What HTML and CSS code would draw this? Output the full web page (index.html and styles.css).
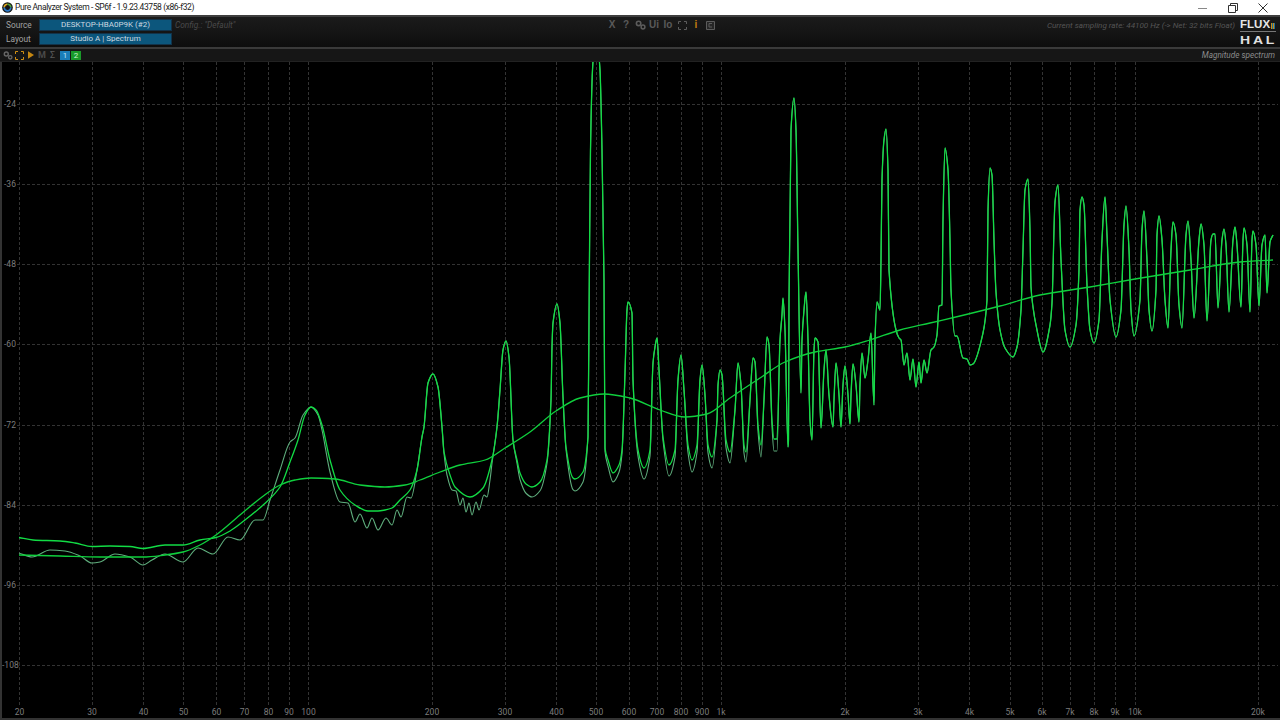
FILE: index.html
```html
<!DOCTYPE html>
<html lang="en">
<head>
<meta charset="utf-8">
<title>Pure Analyzer System</title>
<link rel="stylesheet" href="styles.css">
</head>
<body>
<div class="app">
  <header class="titlebar">
    <svg class="app-icon" viewBox="0 0 12 12"><circle cx="6" cy="6" r="5.800" fill="#141414"/><path d="M2.400 6A3.600 3.600 0 0 1 6 2.400" fill="none" stroke="#e0a81f" stroke-width="1.800"/><path d="M6 2.400A3.600 3.600 0 0 1 9.600 6" fill="none" stroke="#4fa23a" stroke-width="1.800"/><path d="M9.600 6A3.600 3.600 0 0 1 2.400 6" fill="none" stroke="#2a78c8" stroke-width="1.800"/></svg>
    <span class="title-text">Pure Analyzer System - SP6f - 1.9.23.43758 (x86-f32)</span>
    <div class="win-buttons">
      <svg class="win-btn" viewBox="0 0 10 10"><path d="M0 5.500H9" stroke="#888" fill="none"/></svg>
      <svg class="win-btn" viewBox="0 0 10 10"><path d="M.5 2.500H7.500V9.500H.5ZM2.500 2.500V.5H9.500V7.500H7.500" stroke="#333" fill="none"/></svg>
      <svg class="win-btn" viewBox="0 0 10 10"><path d="M.5.5L9.500 9.500M9.500.5L.5 9.500" stroke="#333" fill="none"/></svg>
    </div>
  </header>

  <section class="topbar">
    <div class="selectors">
      <div class="sel-row"><span class="sel-label">Source</span><span class="sel-value">DESKTOP-HBA0P9K (#2)</span></div>
      <div class="sel-row"><span class="sel-label">Layout</span><span class="sel-value">Studio A | Spectrum</span></div>
    </div>
    <span class="config">Config.: "Default"</span>
    <div class="top-tools">
      <span class="tool tool-x">X</span>
      <span class="tool">?</span>
      <span class="tool"><svg class="gears" viewBox="0 0 11 10"><circle cx="3.600" cy="3.400" r="2.200" fill="none" stroke="#5c5c5c" stroke-width="1.600"/><circle cx="8" cy="7" r="1.900" fill="none" stroke="#5c5c5c" stroke-width="1.500"/></svg></span>
      <span class="tool">Ui</span>
      <span class="tool">Io</span>
      <span class="tool"><svg class="frame" viewBox="0 0 9 9"><path d="M.5 3V.5H3M6 .5H8.500V3M8.500 6V8.500H6M3 8.500H.5V6" fill="none" stroke="#5c5c5c"/></svg></span>
      <span class="tool tool-i">i</span>
      <span class="tool"><svg class="boxed" viewBox="0 0 9 9"><path d="M.5.5H8.500V8.500H.5Z" fill="#262626" stroke="#5c5c5c"/><path d="M3 2.500H6M3 2.500V6H6" fill="none" stroke="#5c5c5c"/></svg></span>
    </div>
    <span class="rate">Current sampling rate: 44100 Hz (-&gt; Net: 32 bits Float)</span>
    <div class="logo">
      <div class="logo-flux"><span class="flux-word">FLUX</span><span class="flux-dots"></span></div>
      <div class="logo-sub"></div>
      <div class="logo-hal">HAL</div>
    </div>
  </section>

  <section class="subbar">
    <svg class="gears small" viewBox="0 0 11 10"><circle cx="3.600" cy="3.400" r="2.200" fill="none" stroke="#666" stroke-width="1.600"/><circle cx="8" cy="7" r="1.900" fill="none" stroke="#666" stroke-width="1.500"/></svg>
    <svg class="frame orange" viewBox="0 0 9 9"><path d="M.5 3V.5H3M6 .5H8.500V3M8.500 6V8.500H6M3 8.500H.5V6" fill="none" stroke="#d08f14"/></svg>
    <svg class="play" viewBox="0 0 7 9"><path d="M0 0L7 4.500L0 9Z" fill="#c58712"/></svg>
    <span class="sub-m">M</span>
    <span class="sub-s">Σ</span>
    <span class="chan chan-1">1</span>
    <span class="chan chan-2">2</span>
    <span class="mode">Magnitude spectrum</span>
  </section>

  <main class="plot">
    <svg id="chart" class="chart" viewBox="0 0 1278 656">
      <g class="grid" id="grid"></g>
      <g class="axis" id="axis">
        <text x="2" y="45">-24</text><text x="2" y="125">-36</text><text x="2" y="205">-48</text><text x="2" y="285">-60</text><text x="2" y="366">-72</text><text x="2" y="446">-84</text><text x="2" y="526">-96</text><text x="0" y="606">-108</text>
      </g>
      <g class="axis axis-x" id="axis-x"></g>
      <g id="curves"></g>
    </svg>
  </main>
</div>
<script src="chart.js"></script>
</body>
</html>
```
FILE: styles.css
```css
* { box-sizing: border-box; }
html, body { margin: 0; height: 100%; background: #000; overflow: hidden; }
.app { width: 1280px; height: 720px; display: flex; flex-direction: column; font-family: Roboto, "Liberation Sans", sans-serif; }

.titlebar { height: 15px; flex: none; background: #fff; display: flex; align-items: center; padding-left: 2px; color: #222; }
.app-icon { width: 11px; height: 11px; margin-right: 2px; }
.title-text { font-size: 8.500px; letter-spacing: -.4px; line-height: 15px; white-space: nowrap; }
.win-buttons { margin-left: auto; display: flex; align-items: center; gap: 20px; padding-right: 12px; }
.win-btn { width: 10px; height: 10px; display: block; }

.topbar { height: 32px; flex: none; display: flex; align-items: flex-start; background: linear-gradient(#1b1b1b, #121212 70%, #0d0d0d); border-top: 2px solid #3e3e3e; position: relative; }
.selectors { display: flex; flex-direction: column; gap: 2px; padding: 2px 0 0 6px; }
.sel-row { display: flex; align-items: center; height: 12px; }
.sel-label { width: 33px; font-size: 8.300px; color: #a2a2a2; line-height: 12px; }
.sel-value { width: 133px; height: 12px; background: #0c567c; border: 1px solid #12334a; color: #cbd9e0; font-size: 8px; line-height: 10px; text-align: center; white-space: nowrap; }
.config { width: 433px; flex: none; padding-left: 3px; font-size: 8.300px; font-style: italic; color: #4a4a4a; margin-top: 2px; line-height: 13px; white-space: nowrap; }
.top-tools { display: flex; align-items: center; height: 12px; margin-top: 2px; }
.tool { width: 14px; display: flex; justify-content: center; align-items: center; font-size: 10px; font-weight: 700; color: #5a5a5a; line-height: 12px; font-family: "Liberation Sans", sans-serif; }
.tool-i { color: #c07f10; }
.gears { width: 11px; height: 10px; display: block; }
.frame { width: 9px; height: 9px; display: block; }
.boxed { width: 9px; height: 9px; display: block; }
.rate { margin-left: auto; font-size: 8.100px; font-style: italic; color: #555; line-height: 13px; margin-top: 2px; white-space: nowrap; }
.logo { width: 36px; flex: none; margin: 0 4px 0 5px; padding-top: 3px; display: flex; flex-direction: column; color: #d8d8d8; }
.logo-flux { display: flex; align-items: flex-end; height: 9px; }
.flux-word { font-family: "Liberation Sans", sans-serif; font-size: 11px; line-height: 9px; font-weight: 700; transform: scaleX(1.05); transform-origin: left; color: #e6e6e6; }
.flux-dots { position: absolute; right: 5px; top: 6px; width: 4px; height: 6px; background: repeating-linear-gradient(90deg, #c98a12 0 1px, #1d6f9c 1px 2px); }
.logo-sub { height: 1px; margin-top: 2px; background: #777; }
.logo-hal { font-family: "Liberation Sans", sans-serif; font-size: 10px; line-height: 8px; margin-top: 5px; letter-spacing: 2px; font-weight: 700; color: #e0e0e0; transform: scaleX(1.4); transform-origin: left; white-space: nowrap; }

.subbar { height: 15px; flex: none; display: flex; align-items: center; padding-left: 3px; background: #161616; border-top: 2px solid #3a3a3a; border-bottom: 1px solid #222; }
.gears.small { width: 10px; height: 9px; margin-right: 2px; }
.frame.orange { margin-right: 4px; }
.play { width: 6px; height: 8px; margin-right: 4px; }
.sub-m { width: 9px; font-size: 9px; font-weight: 700; color: #4a4a4a; margin-right: 3px; line-height: 10px; }
.sub-s { width: 7px; font-size: 9px; color: #5a5a5a; margin-right: 3px; line-height: 10px; }
.chan { width: 10px; height: 9px; font-size: 8px; line-height: 9px; text-align: center; margin-right: 1px; }
.chan-1 { background: #1a7db8; color: #bfe2f5; }
.chan-2 { background: #1a9a2a; color: #c8f5cc; }
.mode { margin-left: auto; margin-right: 5px; font-size: 8.200px; font-style: italic; color: #8c8c8c; line-height: 11px; white-space: nowrap; }

.plot { flex: 1; min-height: 0; background: #000; border-left: 2px solid #333; border-bottom: 2px solid #333; overflow: hidden; }
.chart { display: block; width: 1278px; height: 656px; }
.grid line { stroke: #333; stroke-width: 1; stroke-dasharray: 3 2; shape-rendering: crispEdges; }
.axis text { font-family: Roboto, "Liberation Sans", sans-serif; font-size: 8.500px; fill: #7c7c7c; paint-order: stroke; stroke: #000; stroke-width: 2px; }
.axis-x text { text-anchor: middle; }
.curve { fill: none; stroke-linejoin: round; }
.curve-pale { stroke: #5fae7d; stroke-width: 1.100; }
.curve-main { stroke: #12dc45; stroke-width: 1.300; }
.curve-avg { stroke: #0fcf3d; stroke-width: 1.300; }
```
FILE: chart.js
```js
// Measured spectrum traces, in page pixels; drawn with a monotone cubic between key points.
var OX = 2, OY = 62;
var NS = 'http://www.w3.org/2000/svg';

var GRID_X = [19.5, 92, 143.5, 183.5, 216.5, 244.5, 268.5, 289, 308.5, 432, 505, 556.5, 596, 629, 657, 681, 702, 721, 845, 918, 969.5, 1010, 1042, 1070, 1094, 1115, 1135, 1258];
var LABELS_X = ['20','30','40','50','60','70','80','90','100','200','300','400','500','600','700','800','900','1k','2k','3k','4k','5k','6k','7k','8k','9k','10k','20k'];
var GRID_Y = [104.5, 184.5, 264.5, 344.5, 425, 505, 585, 665.5];

var HARMONICS = [
  [422,437],[424,427],[428,383],[433,374],[438,387],[442,427],[444,452],[450,475],[455,487],
  [470,497],[483,488],[492,460],[497,427],[500,390],[503,350],[506,341],[509,357],[513,440],[517,460],
  [520,473],[526,484],[532,487],[540,482],[547,460],[551,400],[552,347],[553,323],[557,304],[560,323],[563,397],[566,447],
  [573,478],[575,479],[583,472],[588,437],[589.3,280],[590.5,150],[592.5,70],[594,50],[598,50],[600,70],[602,150],[604,280],[605,448],[608,460],
  [613,473],[619,465],[622,450],[625,373],[627,310],[628,302],[632,313],[633,380],[638,450],
  [644,468],[650,450],[653,363],[655,347],[657,338],[659,370],[663,437],
  [669,465],[675,450],[678,380],[681,355],[684,390],[688,445],
  [692,460],[697,445],[700,380],[702,365],[705,395],[708,445],
  [712,457],[717,420],[718,385],[720,370],[722,375],[726,440],
  [730,452],[735,410],[738,363],[741,385],[744,445],
  [746,452],[750,400],[753,358],[755,362],[758,425],
  [761,445],[764,400],[767,337],[769,345],[772,420],
  [774,439],[777,439],[780,340],[782,315],[783,298],[785,330],[788,447],
  [788.5,440],[789,300],[791,130],[794,98],[796,130],[798,250],[801,393],
  [802,340],[804,310],[806,292],[808,340],[810,420],[812,440],
  [814,350],[815,338],[818,342],[821,428],
  [824,370],[826,350],[829,395],[833,427],
  [834,400],[836,363],[839,395],[841,427],
  [843,385],[845,366],[848,395],[850,424],
  [851,395],[853,364],[856,385],[859,422],
  [860,385],[862,353],[865,378],[868,360],[871,333],[874,405],
  [875,340],[877,302],[880,310],[881,260],[882,180],[884,140],[886,129],[888,170],[889,270],
  [896,330],[899,338],[901,340],[904,365],[907,353],[910,380],[913,359],[916,387],[919,362],[921,383],[924,360],[927,373],[931,350],[934,347],[937,335],[939,306],[942,305],
  [943,220],[945,148],[948,170],[950,240],[951,290],[955,336],[957,336],[963,358],[967,359],[970,365],[973,364],[983,333],[987,300],[988,210],[990,168],[992,175],[994,240],[996,292],
  [1000,330],[1005,348],[1013,357],[1017,347],[1021,310],[1023,250],[1025,190],[1028,179],[1030,230],[1031,287],[1033,307],
  [1036,325],[1043,352],[1050,325],[1052,303],[1055,202],[1058,185],[1061,260],[1065,330],
  [1070,347],[1076,325],[1079,270],[1080,210],[1082,197],[1084,205],[1087,285],
  [1090,330],[1094,343],[1099,320],[1102,240],[1105,197],[1107,235],[1110,300],[1116,337],
  [1121,310],[1124,225],[1126,206],[1129,250],[1131,310],[1134,336],
  [1140,300],[1142,230],[1144,211],[1147,260],[1149,310],[1152,331],
  [1156,290],[1157,235],[1159,216],[1162,240],[1165,300],[1168,328],
  [1171,250],[1173,222],[1176,235],[1179,305],[1182,328],
  [1186,235],[1188,221],[1191,260],[1194,318],
  [1199,240],[1201,224],[1204,245],[1207,321],
  [1211,240],[1213,234],[1215,234],[1218,308],
  [1222,240],[1224,229],[1226,245],[1229,312],
  [1233,240],[1235,227],[1237,245],[1241,307],
  [1243,240],[1244,228],[1247,245],[1250,312],
  [1252,240],[1253,231],[1256,245],[1259,306],
  [1262,245],[1265,235],[1267,293],[1270,242],[1273,235]
];

var LOW_MAIN = [
  [19,537.5],[33,540],[60,541],[75,543],[92,546.5],[110,546],[130,546.5],[143,548.5],[165,545],[183,545],[200,540],[216,537.5],[230,531],[245,520],[262,506],[280,487],[290,462],[298,440],[305,415],[311,407],[316,410],[322,425],[330,460],[340,490],[355,505],[368,511],[378,511],[385,510],[392,508],[400,500],[410,490],[417,470]
];
var LOW_PALE = [
  [19,553],[32,557],[50,550],[65,551],[80,556],[92,563],[100,562],[115,554],[130,557],[143,565],[152,560],[165,554],[183,562],[198,548],[213,554],[228,537],[240,540],[255,520],[263,520],[270,500],[280,470],[290,442],[295,438],[303,415],[311,407],[318,415],[322,430],[330,472],[340,502],[348,503],[355,522],[360,514],[367,528],[372,518],[378,530],[386,518],[392,525],[397,510],[401,517],[407,497],[411,498],[417,470]
];
var RIPPLE_PALE = [[447,475],[452,490],[456,491],[460,505],[463,498],[466,512],[469,503],[472,515],[476,502],[479,510],[484,495],[487,497],[490,480]];
var AVERAGE = [
  [19,555],[60,556],[100,557],[143,557],[165,555],[183,552],[200,545],[216,535],[240,515],[262,497],[280,485],[295,480],[311,478],[335,479],[360,485],[385,487],[405,485],[420,480],[440,472],[460,465],[485,460],[505,448],[530,432],[556,411],[580,398],[604,394],[630,398],[660,410],[685,417],[707,414],[730,398],[760,378],[785,362],[815,352],[845,347],[870,340],[900,330],[930,323],[960,316],[1000,306],[1040,295],[1090,287],[1135,279],[1190,270],[1240,262],[1273,260]
];

// The pale trace matches the main one at the peaks and sits lower in the valleys.
var VALLEYS = [[532,487,10],[575,479,12],[613,473,9],[644,468,11],[669,465,11],[692,460,12],[712,457,11],[730,452,11],[746,452,10],[761,445,12],[775,439,12]];
function paleHarmonics() {
  var out = [], rippleDone = false;
  HARMONICS.forEach(function (p) {
    if (p[0] > 444 && p[0] < 492) {
      if (!rippleDone) { out = out.concat(RIPPLE_PALE); rippleDone = true; }
      return;
    }
    var best = VALLEYS[0];
    VALLEYS.forEach(function (v) { if (Math.abs(v[0] - p[0]) < Math.abs(best[0] - p[0])) best = v; });
    var t = Math.max(0, Math.min(1, (p[1] - (best[1] - 40)) / 40));
    out.push([p[0], p[0] < 785 ? p[1] + best[2] * t : p[1]]);
  });
  return out;
}

function monotone(pts) {
  var n = pts.length, d = [], m = [], i;
  for (i = 0; i < n - 1; i++) d[i] = (pts[i+1][1] - pts[i][1]) / (pts[i+1][0] - pts[i][0]);
  m[0] = d[0]; m[n-1] = d[n-2];
  for (i = 1; i < n - 1; i++) m[i] = d[i-1] * d[i] <= 0 ? 0 : 2 * d[i-1] * d[i] / (d[i-1] + d[i]);
  var s = 'M' + (pts[0][0] - OX) + ' ' + (pts[0][1] - OY);
  for (i = 0; i < n - 1; i++) {
    var h = (pts[i+1][0] - pts[i][0]) / 3;
    s += 'C' + (pts[i][0] + h - OX).toFixed(2) + ' ' + (pts[i][1] + m[i] * h - OY).toFixed(2) + ' ' +
         (pts[i+1][0] - h - OX).toFixed(2) + ' ' + (pts[i+1][1] - m[i+1] * h - OY).toFixed(2) + ' ' +
         (pts[i+1][0] - OX) + ' ' + (pts[i+1][1] - OY);
  }
  return s;
}

function el(name, attrs, parent, text) {
  var e = document.createElementNS(NS, name);
  for (var k in attrs) e.setAttribute(k, attrs[k]);
  if (text) e.textContent = text;
  parent.appendChild(e);
  return e;
}

var grid = document.getElementById('grid');
GRID_X.forEach(function (x, i) {
  el('line', {x1: x - OX, x2: x - OX, y1: 0, y2: 644}, grid);
  el('text', {x: x - OX, y: 653}, document.getElementById('axis-x'), LABELS_X[i]);
});
GRID_Y.forEach(function (y) {
  el('line', {x1: 15, x2: 1276, y1: y - OY, y2: y - OY}, grid);
});

var curves = document.getElementById('curves');
el('path', {'class': 'curve curve-pale', d: monotone(LOW_PALE.concat(paleHarmonics()))}, curves);
el('path', {'class': 'curve curve-main', d: monotone(LOW_MAIN.concat(HARMONICS))}, curves);
el('path', {'class': 'curve curve-avg', d: monotone(AVERAGE)}, curves);
```
